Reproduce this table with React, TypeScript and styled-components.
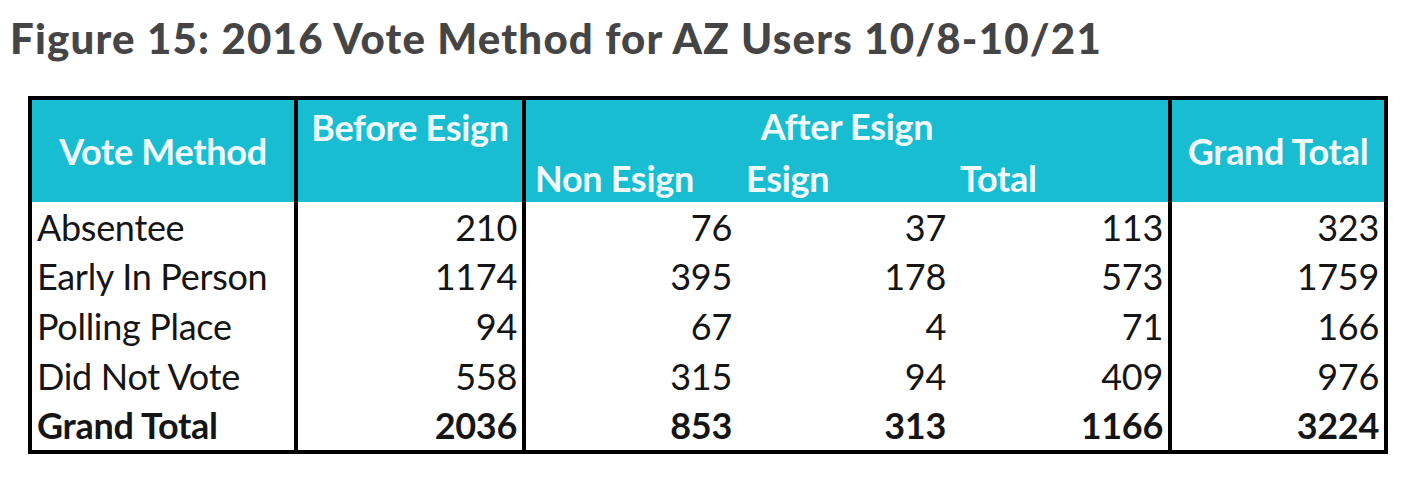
import React from 'react';
import styled, { createGlobalStyle } from 'styled-components';

const GlobalStyle = createGlobalStyle`
	body {
		margin: 0;
		background: #ffffff;
		font-family: Lato, 'Liberation Sans', sans-serif;
	}
`;

const Page = styled.div`
	padding: 12px 0 0 10px;
`;

const Title = styled.h1`
	margin: 0 0 32px 0;
	font-family: Lato, 'Open Sans', sans-serif;
	font-weight: 900;
	font-size: 42px;
	line-height: 52px;
	letter-spacing: 1.2px;
	color: #454545;
`;

const Table = styled.div`
	margin-left: 18px;
	width: 1360px;
	box-sizing: border-box;
	border: 4px solid #000;
	display: grid;
	grid-template-columns: 266px 228px 211px 214px 221px 212px;
	grid-template-rows: 51px 51px repeat(5, 49.6px);
	font-family: Lato, 'Liberation Sans', sans-serif;
	font-size: 36px;
	letter-spacing: -0.3px;
`;

const HeadCell = styled.div<{ $col: string; $row: string; $align?: 'center' | 'left'; $top?: boolean; $divider?: boolean }>`
	grid-column: ${(p) => p.$col};
	grid-row: ${(p) => p.$row};
	background: #19bdd2;
	color: #f1fbfd;
	font-weight: 700;
	display: flex;
	justify-content: ${(p) => (p.$align === 'left' ? 'flex-start' : 'center')};
	align-items: ${(p) => (p.$top ? 'flex-start' : 'center')};
	padding: ${(p) => (p.$top ? '5px 0 0 0' : p.$align === 'left' ? '2px 0 0 9px' : '0')};
	border-right: ${(p) => (p.$divider ? '4px solid #000' : 'none')};
	white-space: nowrap;
`;

const BodyCell = styled.div<{ $label?: boolean; $bold?: boolean; $divider?: boolean }>`
	display: flex;
	align-items: center;
	justify-content: ${(p) => (p.$label ? 'flex-start' : 'flex-end')};
	padding: ${(p) => (p.$label ? '0 0 0 5px' : '0 5px 0 0')};
	color: #151515;
	font-weight: ${(p) => (p.$bold ? 700 : 400)};
	border-right: ${(p) => (p.$divider ? '4px solid #000' : 'none')};
	white-space: nowrap;
`;

type Row = { label: string; values: number[]; bold?: boolean };

const rows: Row[] = [
	{ label: 'Absentee', values: [210, 76, 37, 113, 323] },
	{ label: 'Early In Person', values: [1174, 395, 178, 573, 1759] },
	{ label: 'Polling Place', values: [94, 67, 4, 71, 166] },
	{ label: 'Did Not Vote', values: [558, 315, 94, 409, 976] },
	{ label: 'Grand Total', values: [2036, 853, 313, 1166, 3224], bold: true },
];

// columns that end with a black rule: Vote Method, Before Esign, After Esign Total
const dividerAfter = [0, 1, 4];

export default function App() {
	return (
		<>
			<GlobalStyle />
			<Page>
				<Title>Figure 15: 2016 Vote Method for AZ Users 10/8-10/21</Title>
				<Table>
					<HeadCell $col="1" $row="1 / span 2" $divider>
						Vote Method
					</HeadCell>
					<HeadCell $col="2" $row="1 / span 2" $top $divider>
						Before Esign
					</HeadCell>
					<HeadCell $col="3 / span 3" $row="1" $divider>
						After Esign
					</HeadCell>
					<HeadCell $col="3" $row="2" $align="left">
						Non Esign
					</HeadCell>
					<HeadCell $col="4" $row="2" $align="left">
						Esign
					</HeadCell>
					<HeadCell $col="5" $row="2" $align="left" $divider>
						Total
					</HeadCell>
					<HeadCell $col="6" $row="1 / span 2">
						Grand Total
					</HeadCell>
					{rows.map((row) => (
						<React.Fragment key={row.label}>
							<BodyCell $label $bold={row.bold} $divider>
								{row.label}
							</BodyCell>
							{row.values.map((v, i) => (
								<BodyCell key={i} $bold={row.bold} $divider={dividerAfter.includes(i + 1)}>
									{v}
								</BodyCell>
							))}
						</React.Fragment>
					))}
				</Table>
			</Page>
		</>
	);
}
